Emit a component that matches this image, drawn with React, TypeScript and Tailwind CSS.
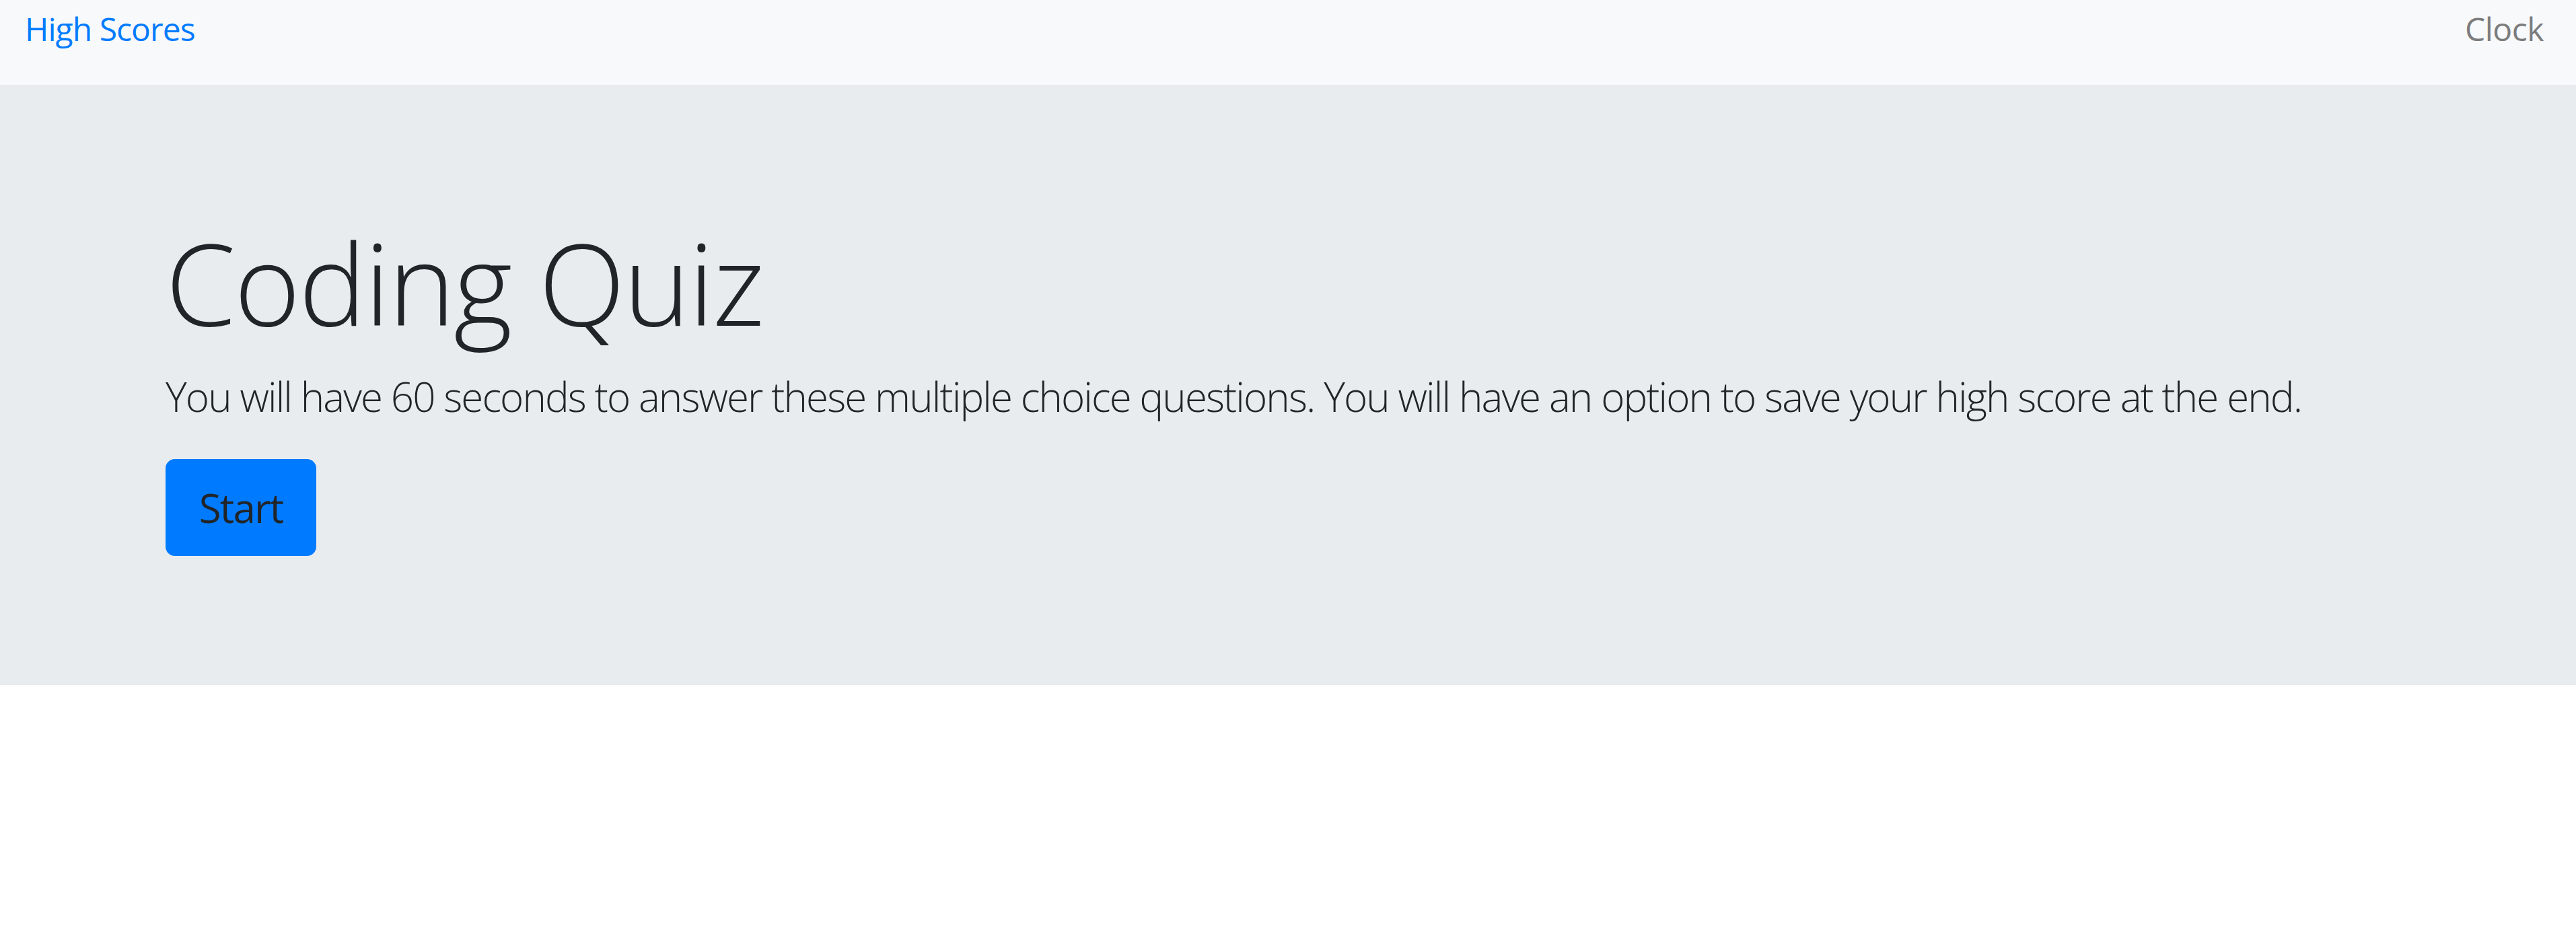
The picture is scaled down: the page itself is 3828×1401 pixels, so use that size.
export default function App() {
  return (
    <div className="min-h-[1401px] bg-white" style={{ fontFamily: '"Open Sans", "Noto Sans", sans-serif' }}>
      <nav className="h-[126px] bg-[#f8f9fa] flex justify-between items-start pl-[37px] pr-[48px] pt-[7px]">
        <a className="text-[48px] leading-[72px] text-[#007bff] font-normal tracking-[-0.02em]">High Scores</a>
        <span className="text-[48px] leading-[72px] text-[#7b7c7d] font-normal tracking-[-0.01em]">Clock</span>
      </nav>
      <section className="bg-[#e9ecef] pt-[192px] pb-[192px] pl-[246px] text-[#212529]">
        <h1 className="text-[168px] leading-[1.2] font-light mb-[24px] tracking-[-0.014em]">Coding Quiz</h1>
        <p className="text-[60px] leading-[1.5] font-light mb-[48px] tracking-[-0.031em]">
          You will have 60 seconds to answer these multiple choice questions. You will have an option to save your high score at the end.
        </p>
        <button className="h-[144px] w-[224px] text-[60px] leading-[1.5] font-normal rounded-[14px] bg-[#007bff] text-[#212529] tracking-[-0.03em]">
          Start
        </button>
      </section>
    </div>
  );
}
